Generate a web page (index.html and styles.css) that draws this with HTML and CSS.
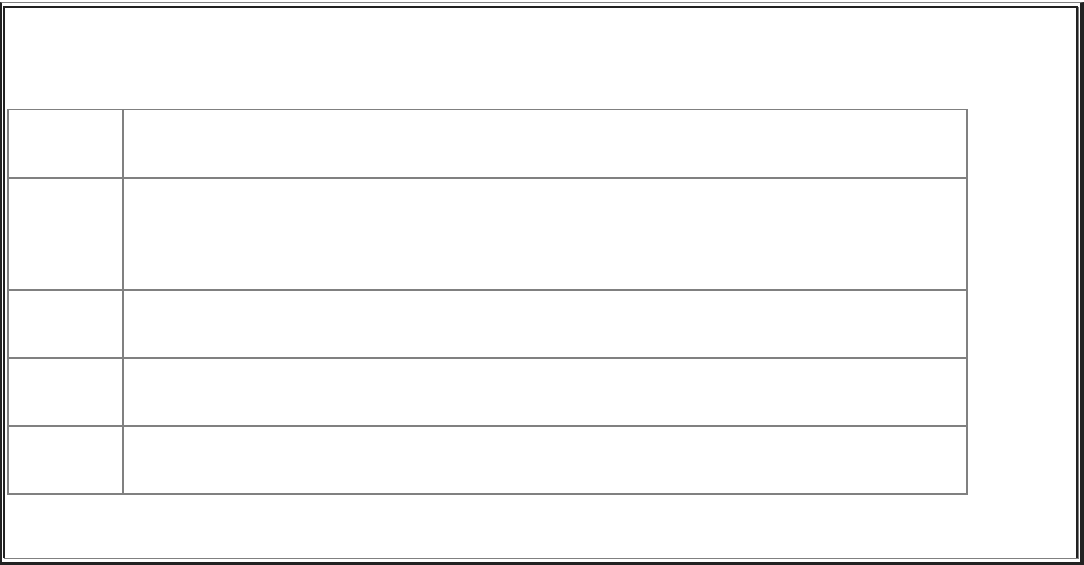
FILE: index.html
```html
<!DOCTYPE html>
<html>
<head>
<meta charset="utf-8">
<link rel="stylesheet" href="styles.css">
</head>
<body>
<div class="frame">
  <div class="inner">
    <table class="grid">
      <tr class="row-a"><td class="c1"></td><td class="c2"></td></tr>
      <tr class="row-b"><td class="c1"></td><td class="c2"></td></tr>
      <tr class="row-c"><td class="c1"></td><td class="c2"></td></tr>
      <tr class="row-c"><td class="c1"></td><td class="c2"></td></tr>
      <tr class="row-c"><td class="c1"></td><td class="c2"></td></tr>
    </table>
  </div>
</div>
</body>
</html>
```

FILE: styles.css
```css
html, body {
  margin: 0;
  padding: 0;
  background: #fff;
  font-family: "Liberation Serif", serif;
}
body {
  height: 565px;
  overflow: hidden;
}
.frame {
  box-sizing: border-box;
  height: 563px;
  margin-top: 2px;
  border-top: 1px solid #808080;
  border-left: 2px solid #222;
  border-right: 4px solid #222;
  border-bottom: 3px solid #222;
  padding: 3px 2px 4px 1px;
}
.inner {
  box-sizing: border-box;
  height: 100%;
  border-top: 2px solid #222;
  border-left: 2px solid #222;
  border-right: 2px solid #222;
  box-shadow: 1px 1px 0 #808080;
  padding: 101px 0 0 2px;
}
.grid {
  border-collapse: separate;
  border-spacing: 0;
  border-left: 1px solid #808080;
  border-right: 1px solid #808080;
  border-bottom: 1px solid #808080;
  width: 961px;
}
.grid td {
  box-sizing: border-box;
  border: 1px solid #808080;
  padding: 0;
}
.c1 { width: 115px; }
.c2 { width: 844px; }
.row-a td { height: 69px; }
.row-b td { height: 112px; }
.row-c td { height: 68px; }
```
